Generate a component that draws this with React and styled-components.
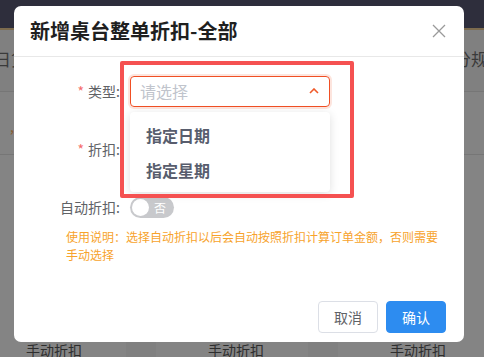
import React from 'react';
import styled, { createGlobalStyle } from 'styled-components';

const GlobalStyle = createGlobalStyle`
  html, body {
    margin: 0;
    padding: 0;
    width: 484px;
    height: 357px;
    overflow: hidden;
    font-family: "Noto Sans CJK SC", "Noto Sans", sans-serif;
  }
`;

const Page = styled.div`
  position: relative;
  width: 484px;
  height: 357px;
  background: #808080;
  overflow: hidden;
`;

const TopBar = styled.div`
  height: 28px;
  background: #2e2e3c;
  border-bottom: 2px solid #7c6b4e;
`;

const HeadRow = styled.div`
  height: 62px;
  display: flex;
  align-items: center;
  justify-content: space-between;
  border-bottom: 1px solid #767676;
  font-size: 17px;
  color: #3a3a3a;
  padding-bottom: 4px;
  box-sizing: border-box;
`;

const Clip = styled.span`
  margin: ${p => (p.$right ? '0 -4px 0 0' : '0 0 0 -6px')};
`;

const TableRow = styled.div`
  height: 63px;
  border-bottom: 1px solid #767676;
  background: #838383;
  font-size: 14px;
  color: #8a5a2a;
  padding: 24px 0 0 10px;
  box-sizing: border-box;
`;

const Cards = styled.div`
  display: grid;
  grid-template-columns: repeat(3, 152px);
  gap: 30px;
  margin-left: -26px;
  height: 200px;
`;

const Card = styled.div`
  background: #848484;
  font-size: 14px;
  color: #2e2e2e;
  padding: 185px 0 0 52px;
  box-sizing: border-box;
`;

const Modal = styled.div`
  position: absolute;
  left: 14px;
  top: 6px;
  width: 450px;
  height: 336px;
  background: #fff;
  border-radius: 7px;
  display: flex;
  flex-direction: column;
  box-sizing: border-box;
`;

const Header = styled.div`
  height: 51px;
  display: flex;
  align-items: center;
  justify-content: space-between;
  padding: 0 18px 0 16px;
  border-bottom: 1px solid #e8e8e8;
  box-sizing: border-box;
`;

const Title = styled.div`
  font-size: 20px;
  font-weight: 700;
  color: #1f1f1f;
  margin-top: -1px;
`;

const Body = styled.div`
  padding: 18px 0 0 0;
`;

const Row = styled.div`
  display: flex;
  align-items: center;
  height: 32px;
  margin-bottom: ${p => p.$mb || 26}px;
  position: relative;
`;

const Label = styled.div`
  width: 116px;
  padding-right: 10px;
  box-sizing: border-box;
  text-align: right;
  font-size: 14px;
  color: #606266;
  flex-shrink: 0;
`;

const Star = styled.span`
  color: #f56c6c;
  margin-right: 4px;
`;

const Select = styled.div`
  width: 200px;
  height: 31px;
  border: 1px solid #f04f24;
  border-radius: 4px;
  box-shadow: 0 0 0 2px rgba(240, 80, 36, 0.15);
  display: flex;
  align-items: center;
  justify-content: space-between;
  padding: 0 10px 0 9px;
  box-sizing: border-box;
`;

const Placeholder = styled.span`
  font-size: 16px;
  color: #c0c4cc;
`;

const Dropdown = styled.div`
  position: absolute;
  left: 116px;
  top: 37px;
  width: 200px;
  background: #fff;
  border-radius: 4px;
  box-shadow: 0 2px 10px rgba(0, 0, 0, 0.13);
  padding: 6px 0 4px;
  z-index: 2;
`;

const Option = styled.div`
  height: 35px;
  line-height: 35px;
  padding-left: 16px;
  font-size: 16px;
  font-weight: 700;
  color: #585d6d;
`;

const Switch = styled.div`
  width: 44px;
  height: 21px;
  border-radius: 11px;
  background: #c8c9cc;
  display: flex;
  align-items: center;
  padding: 0 2px;
  box-sizing: border-box;
  gap: 5px;
`;

const Knob = styled.div`
  width: 17px;
  height: 17px;
  border-radius: 50%;
  background: #fff;
`;

const SwitchText = styled.span`
  font-size: 12px;
  color: #fff;
`;

const Note = styled.div`
  margin-left: 52px;
  width: 376px;
  font-size: 12px;
  line-height: 18px;
  color: #f7a32c;
`;

const Footer = styled.div`
  margin-top: auto;
  display: flex;
  justify-content: flex-end;
  gap: 8px;
  padding: 0 18px 9px 0;
`;

const Button = styled.button`
  width: 60px;
  height: 32px;
  border-radius: 4px;
  font-family: inherit;
  font-size: 14px;
  border: 1px solid ${p => (p.$primary ? '#2d8cf0' : '#dcdfe6')};
  background: ${p => (p.$primary ? '#2d8cf0' : '#fff')};
  color: ${p => (p.$primary ? '#fff' : '#606266')};
  padding: 0;
`;

const Highlight = styled.div`
  position: absolute;
  left: 106px;
  top: 55px;
  width: 234px;
  height: 137px;
  border: 4px solid #f55151;
  border-radius: 2px;
  box-sizing: border-box;
  z-index: 3;
  pointer-events: none;
`;

const CloseIcon = () => (
  <svg width="14" height="14" viewBox="0 0 14 14">
    <path d="M1 1L13 13M13 1L1 13" stroke="#9a9a9a" strokeWidth="1.3" />
  </svg>
);

const ChevronUp = () => (
  <svg width="10" height="6" viewBox="0 0 10 6">
    <path d="M1 5L5 1L9 5" fill="none" stroke="#f05a2a" strokeWidth="1.6" />
  </svg>
);

export default function App() {
  return (
    <>
      <GlobalStyle />
      <Page>
        <TopBar />
        <HeadRow>
          <Clip>日货</Clip>
          <Clip $right>分规</Clip>
        </HeadRow>
        <TableRow>,</TableRow>
        <Cards>
          <Card>手动折扣</Card>
          <Card>手动折扣</Card>
          <Card>手动折扣</Card>
        </Cards>

        <Modal>
          <Header>
            <Title>新增桌台整单折扣-全部</Title>
            <CloseIcon />
          </Header>
          <Body>
            <Row>
              <Label><Star>*</Star>类型:</Label>
              <Select>
                <Placeholder>请选择</Placeholder>
                <ChevronUp />
              </Select>
              <Dropdown>
                <Option>指定日期</Option>
                <Option>指定星期</Option>
              </Dropdown>
            </Row>
            <Row>
              <Label><Star>*</Star>折扣:</Label>
            </Row>
            <Row $mb={5}>
              <Label>自动折扣:</Label>
              <Switch>
                <Knob />
                <SwitchText>否</SwitchText>
              </Switch>
            </Row>
            <Note>
              使用说明：选择自动折扣以后会自动按照折扣计算订单金额，否则需要手动选择
            </Note>
          </Body>
          <Footer>
            <Button>取消</Button>
            <Button $primary>确认</Button>
          </Footer>
          <Highlight />
        </Modal>
      </Page>
    </>
  );
}
